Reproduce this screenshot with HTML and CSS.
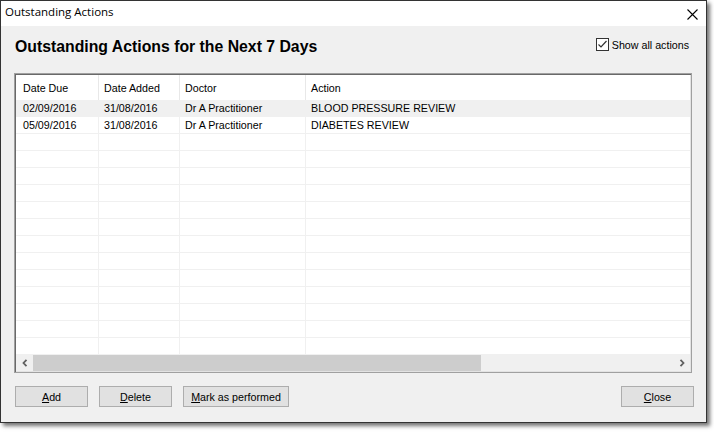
FILE: index.html
```html
<!DOCTYPE html>
<html>
<head>
<meta charset="utf-8">
<link rel="stylesheet" href="styles.css">
</head>
<body>
<div class="window">
  <div class="titlebar">
    <span class="title">Outstanding Actions</span>
    <svg class="close" width="11" height="11" viewBox="0 0 11 11"><path d="M0.5 0.5 L10.5 10.5 M10.5 0.5 L0.5 10.5" stroke="#000" stroke-width="1.1" fill="none"/></svg>
  </div>
  <div class="body">
    <div class="top">
      <h1 class="heading">Outstanding Actions for the Next 7 Days</h1>
      <label class="check">
        <span class="box"><svg width="11" height="11" viewBox="0 0 11 11"><polyline points="1.5,5.5 4,8 9.5,2" stroke="#333" stroke-width="1.2" fill="none"/></svg></span>
        <span class="check-label">Show all actions</span>
      </label>
    </div>
    <div class="list">
      <div class="grid">
        <div class="row head"><div class="c c1">Date Due</div><div class="c c2">Date Added</div><div class="c c3">Doctor</div><div class="c c4">Action</div></div>
        <div class="row sel"><div class="c c1">02/09/2016</div><div class="c c2">31/08/2016</div><div class="c c3">Dr A Practitioner</div><div class="c c4">BLOOD PRESSURE REVIEW</div></div>
        <div class="row"><div class="c c1">05/09/2016</div><div class="c c2">31/08/2016</div><div class="c c3">Dr A Practitioner</div><div class="c c4">DIABETES REVIEW</div></div>
        <div class="row"><div class="c c1"></div><div class="c c2"></div><div class="c c3"></div><div class="c c4"></div></div>
        <div class="row"><div class="c c1"></div><div class="c c2"></div><div class="c c3"></div><div class="c c4"></div></div>
        <div class="row"><div class="c c1"></div><div class="c c2"></div><div class="c c3"></div><div class="c c4"></div></div>
        <div class="row"><div class="c c1"></div><div class="c c2"></div><div class="c c3"></div><div class="c c4"></div></div>
        <div class="row"><div class="c c1"></div><div class="c c2"></div><div class="c c3"></div><div class="c c4"></div></div>
        <div class="row"><div class="c c1"></div><div class="c c2"></div><div class="c c3"></div><div class="c c4"></div></div>
        <div class="row"><div class="c c1"></div><div class="c c2"></div><div class="c c3"></div><div class="c c4"></div></div>
        <div class="row"><div class="c c1"></div><div class="c c2"></div><div class="c c3"></div><div class="c c4"></div></div>
        <div class="row"><div class="c c1"></div><div class="c c2"></div><div class="c c3"></div><div class="c c4"></div></div>
        <div class="row"><div class="c c1"></div><div class="c c2"></div><div class="c c3"></div><div class="c c4"></div></div>
        <div class="row"><div class="c c1"></div><div class="c c2"></div><div class="c c3"></div><div class="c c4"></div></div>
        <div class="row"><div class="c c1"></div><div class="c c2"></div><div class="c c3"></div><div class="c c4"></div></div>
        <div class="row"><div class="c c1"></div><div class="c c2"></div><div class="c c3"></div><div class="c c4"></div></div>
      </div>
      <div class="hscroll">
        <div class="arrow"><svg width="8" height="8" viewBox="0 0 8 8"><polyline points="5.5,0.8 2.5,4 5.5,7.2" stroke="#606060" stroke-width="1.8" fill="none"/></svg></div>
        <div class="track"><div class="thumb"></div></div>
        <div class="arrow"><svg width="8" height="8" viewBox="0 0 8 8"><polyline points="2.5,0.8 5.5,4 2.5,7.2" stroke="#606060" stroke-width="1.8" fill="none"/></svg></div>
      </div>
    </div>
    <div class="buttons">
      <button class="btn"><u>A</u>dd</button>
      <button class="btn"><u>D</u>elete</button>
      <button class="btn wide"><u>M</u>ark as performed</button>
      <span class="spacer"></span>
      <button class="btn"><u>C</u>lose</button>
    </div>
  </div>
</div>
</body>
</html>
```

FILE: styles.css
```css
html, body {
  margin: 0;
  padding: 0;
  background: #ffffff;
}
body {
  width: 714px;
  height: 432px;
  overflow: hidden;
  font-family: "Liberation Sans", Arial, sans-serif;
  font-size: 10.7px;
  color: #000;
}
.window {
  width: 707px;
  height: 423px;
  box-sizing: border-box;
  border: 1px solid #333;
  background: #f0f0f0;
  box-shadow: 3px 3px 4px rgba(0, 0, 0, 0.55);
  display: flex;
  flex-direction: column;
}
.titlebar {
  height: 25px;
  flex: none;
  background: #fff;
  display: flex;
  align-items: flex-start;
  justify-content: space-between;
}
.title {
  font-family: "Open Sans", "Noto Sans", sans-serif;
  font-size: 11.5px;
  line-height: 22px;
  padding-left: 4px;
}
.close {
  margin-top: 8px;
  margin-right: 8px;
}
.body {
  flex: 1;
  display: flex;
  flex-direction: column;
  padding: 11px 14px 15px 13px;
}
.top {
  display: flex;
  justify-content: space-between;
  align-items: flex-start;
  height: 19px;
  margin-bottom: 17px;
}
.heading {
  margin: 0 0 0 1px;
  font-size: 15.8px;
  font-weight: bold;
  line-height: 19px;
}
.check {
  display: flex;
  align-items: flex-start;
  margin-top: 1px;
  margin-right: 3px;
}
.box {
  width: 13px;
  height: 13px;
  box-sizing: border-box;
  border: 1px solid #333;
  background: #fff;
  display: flex;
  align-items: center;
  justify-content: center;
}
.check-label {
  margin-left: 3px;
  line-height: 13px;
  padding-top: 1px;
}
.list {
  height: 300px;
  box-sizing: border-box;
  border: 1px solid #a0a0a0;
  box-shadow: inset 1px 1px 0 #696969, inset -1px -1px 0 #e3e3e3;
  padding: 1px;
  background: #fff;
  display: flex;
  flex-direction: column;
}
.grid {
  flex: 1;
  overflow: hidden;
}
.row {
  display: flex;
  height: 17px;
  box-sizing: border-box;
  border-bottom: 1px solid #f0f0f0;
  line-height: 14px;
  white-space: nowrap;
}
.row.head {
  height: 25px;
  border-bottom: none;
  line-height: 25px;
}
.row.head .c {
  padding-top: 1px;
  border-right-color: #e8e8e8;
}
.row.sel {
  background: #f0f0f0;
}
.c {
  box-sizing: border-box;
  height: 100%;
  padding-top: 1px;
  padding-left: 5px;
  border-right: 1px solid #f0f0f0;
  overflow: hidden;
}
.c1 { width: 83px; padding-left: 7px; }
.c2 { width: 81px; }
.c3 { width: 126px; }
.c4 { flex: 1; border-right: none; }
.hscroll {
  height: 17px;
  flex: none;
  background: #f0f0f0;
  display: flex;
}
.arrow {
  width: 17px;
  display: flex;
  align-items: center;
  justify-content: center;
}
.track {
  flex: 1;
  padding-top: 1px;
}
.thumb {
  width: 448px;
  height: 16px;
  background: #cdcdcd;
}
.buttons {
  display: flex;
  margin-top: 13px;
  padding-left: 1px;
  margin-right: -2px;
  gap: 11px;
}
.spacer {
  flex: 1;
}
.btn {
  width: 73px;
  height: 21px;
  box-sizing: border-box;
  border: 1px solid #adadad;
  background: #e1e1e1;
  font-family: "Liberation Sans", Arial, sans-serif;
  font-size: 10.7px;
  color: #000;
  padding: 1px 0 0 0;
  margin: 0;
  line-height: 17px;
}
.btn.wide {
  width: 106px;
}
```
